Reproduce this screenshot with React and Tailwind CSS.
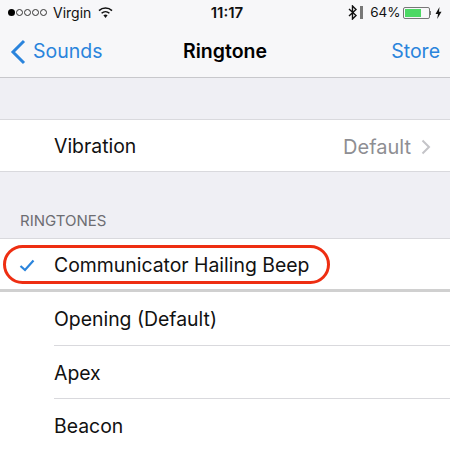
const font = { fontFamily: '"Inter", "Liberation Sans", sans-serif' };

function StatusBar() {
  return (
    <div className="flex items-center justify-between h-[25px] pl-[8px] pr-[8px] text-[14px] leading-none text-[#111]">
      <div className="flex items-center w-[172px]">
        <div className="flex gap-[1px] items-center">
          <span className="w-[7px] h-[7px] rounded-full bg-black" />
          {[0, 1, 2, 3].map((i) => (
            <span key={i} className="w-[7px] h-[7px] rounded-full border border-[#333]" />
          ))}
        </div>
        <span className="ml-[6px]">Virgin</span>
        <svg className="ml-[7px]" width="15" height="11" viewBox="0 0 15 11">
          <path d="M7.5 11 L5.4 8.3 A3.4 3.4 0 0 1 9.6 8.3 Z" fill="#111" />
          <path d="M3.6 6.2 A5.8 5.8 0 0 1 11.4 6.2" fill="none" stroke="#111" strokeWidth="1.5" />
          <path d="M1 3.6 A9.4 9.4 0 0 1 14 3.6" fill="none" stroke="#111" strokeWidth="1.5" />
        </svg>
      </div>
      <span className="font-semibold text-[15px]">11:17</span>
      <div className="flex items-center justify-end w-[168px]">
        <svg width="16" height="15" viewBox="0 0 16 15">
          <path d="M1 4 L8 10.5 L4.5 14 V1 L8 4.5 L1 11" fill="none" stroke="#111" strokeWidth="1.4" />
          <rect x="12" y="1" width="3" height="13" fill="#777" />
        </svg>
        <span className="ml-[6px] text-[13.5px]">64%</span>
        <div className="ml-[2px] flex items-center">
          <div className="w-[27px] h-[12px] border border-[#777] rounded-[2px] p-[1px]">
            <div className="w-[16px] h-full bg-[#4cd964]" />
          </div>
          <div className="w-[1.5px] h-[4px] bg-[#777]" />
        </div>
        <svg className="ml-[4px]" width="7" height="12" viewBox="0 0 7 12">
          <path d="M4.5 0 L0.5 7 H3 L2.2 12 L6.5 4.8 H4 Z" fill="#111" />
        </svg>
      </div>
    </div>
  );
}

function NavBar() {
  return (
    <div className="relative flex items-center justify-between h-[53px] pt-[1px] pl-[10px] pr-[10px] border-b border-[#c8c8cc] text-[19.5px] text-[#2a84dc]">
      <div className="flex items-center">
        <svg width="16" height="26" viewBox="0 0 16 26">
          <path d="M14 2 L3 13 L14 24" fill="none" stroke="#2a84dc" strokeWidth="3" />
        </svg>
        <span className="ml-[7px]">Sounds</span>
      </div>
      <span className="absolute left-0 right-0 text-center font-semibold text-black">Ringtone</span>
      <span>Store</span>
    </div>
  );
}

export default function App() {
  return (
    <div className="w-[450px] h-[449px] overflow-hidden bg-[#efeff4]" style={font}>
      <div className="bg-[#f7f7f9]">
        <StatusBar />
        <NavBar />
      </div>
      <div className="h-[41px]" />
      <div className="flex items-center h-[53px] pt-[2px] pl-[54px] pr-[18px] text-[19.4px] text-[#111] bg-white border-y border-[#d9d9dd]">
        <span>Vibration</span>
        <span className="ml-auto text-[20px] text-[#8e8e93]">Default</span>
        <svg className="ml-[10px]" width="11" height="16" viewBox="0 0 11 16">
          <path d="M1.5 1.5 L8 8 L1.5 14.5" fill="none" stroke="#c4c4c8" strokeWidth="2" />
        </svg>
      </div>
      <div className="flex items-end h-[66px] pl-[20px] pb-[10px] text-[15px] leading-none text-[#6d6d72]">RINGTONES</div>
      <div className="relative flex items-center h-[54px] pt-[3px] pl-[54px] text-[19.4px] text-[#111] bg-white border-t border-b-[3px] border-t-[#d9d9dd] border-b-[#d0d0d0]">
        <svg className="absolute left-[19px] top-[20px]" width="16" height="13" viewBox="0 0 16 13">
          <path d="M1.5 7 L6 11 L14.5 1.5" fill="none" stroke="#2a84dc" strokeWidth="2.2" />
        </svg>
        <span>Communicator Hailing Beep</span>
        <div className="absolute left-[3px] top-[6px] w-[327px] h-[39px] rounded-[20px] border-[3px] border-[#ee2e12]" />
      </div>
      <div className="bg-white">
        <div className="ml-[54px] h-[54px] pt-[3px] flex items-center text-[19.4px] text-[#111] border-b border-[#d9d9dd]">Opening (Default)</div>
        <div className="ml-[54px] h-[53px] pt-[3px] flex items-center text-[19.4px] text-[#111] border-b border-[#d9d9dd]">Apex</div>
        <div className="ml-[54px] h-[53px] pt-[2px] flex items-center text-[19.4px] text-[#111]">Beacon</div>
      </div>
    </div>
  );
}
